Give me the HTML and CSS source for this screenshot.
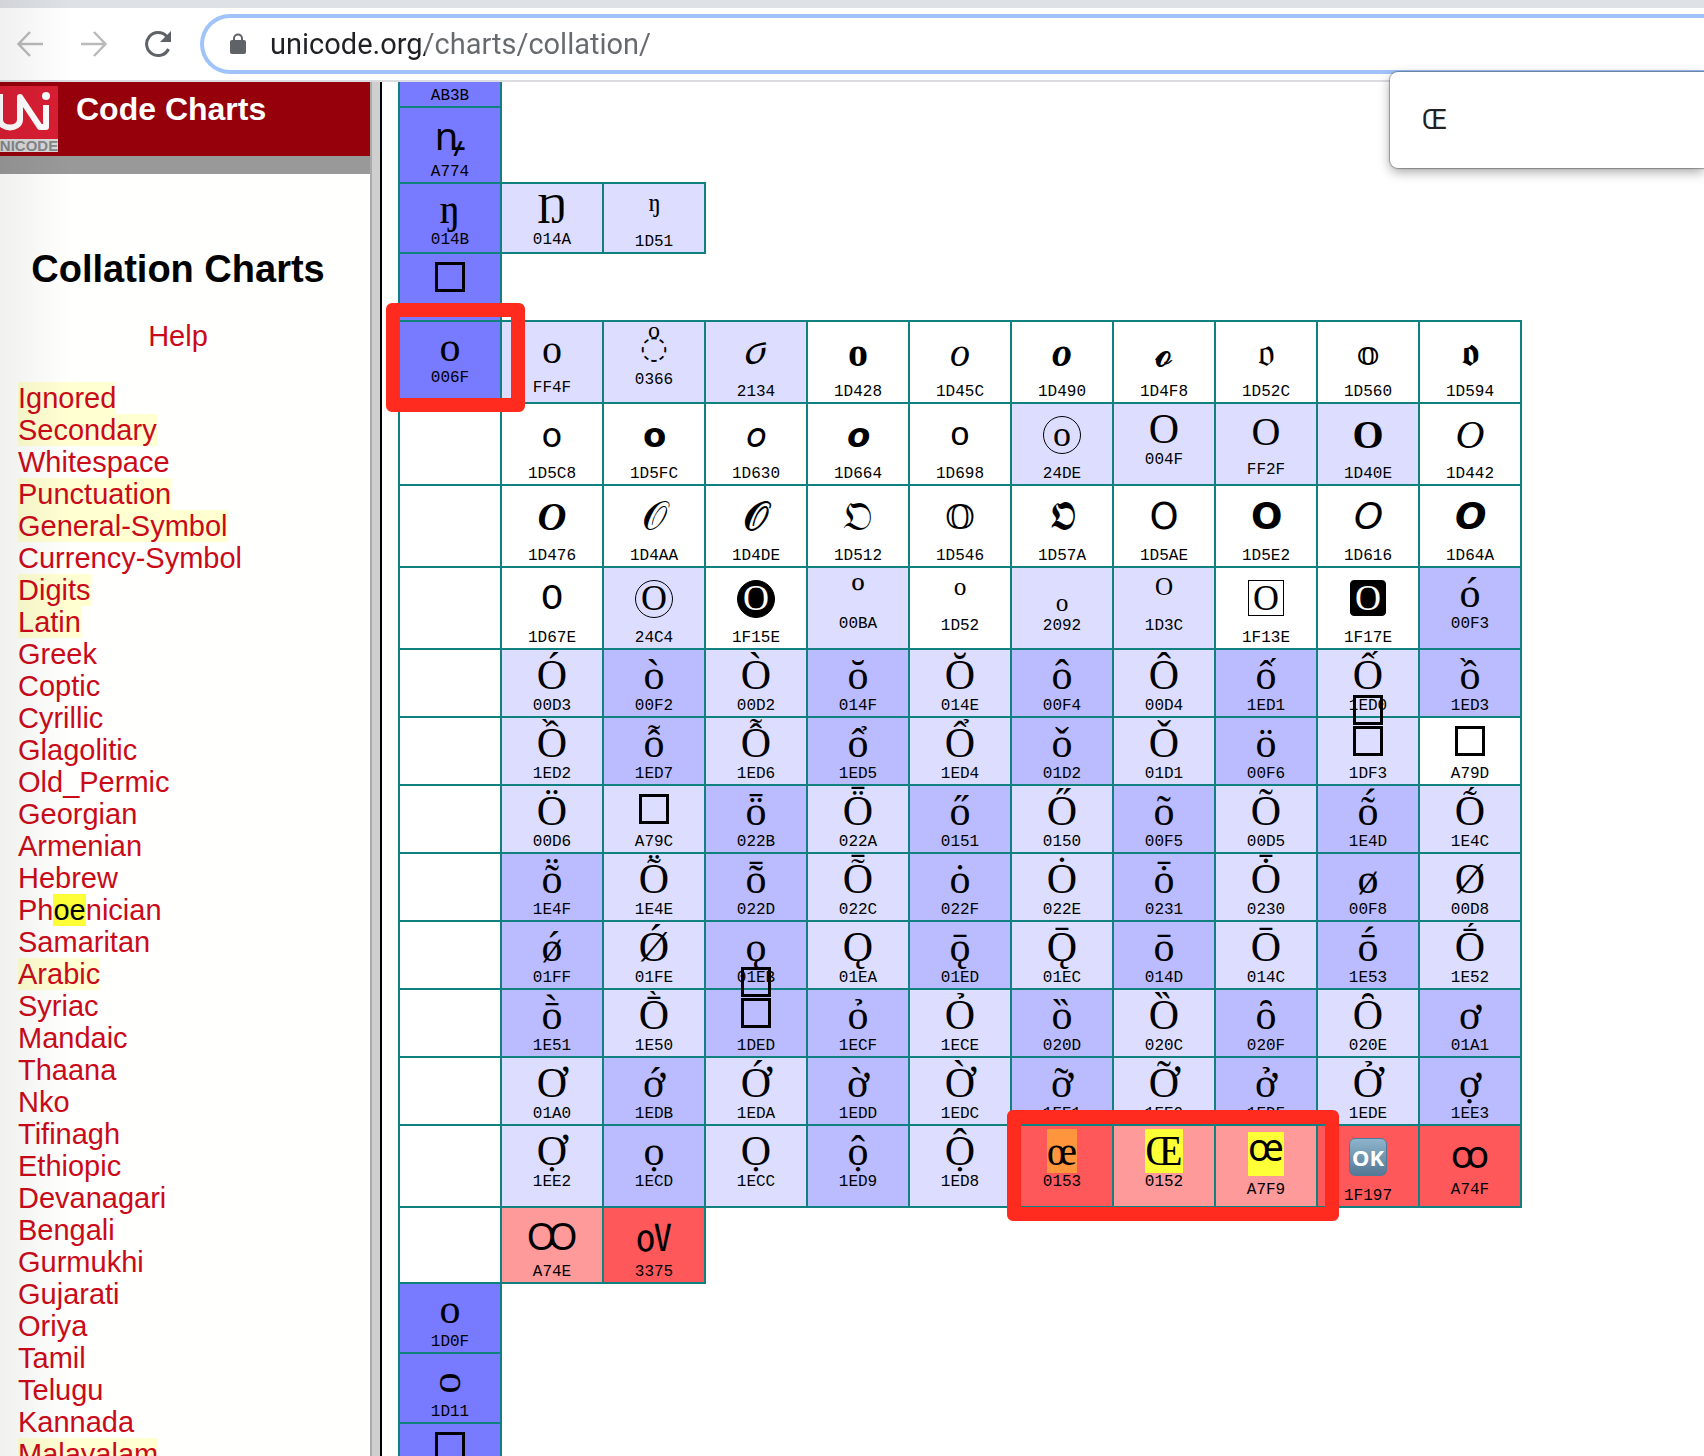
FILE: index.html
```html
<!DOCTYPE html>
<html lang="en">
<head>
<meta charset="utf-8">
<title>Collation Charts</title>
<link rel="stylesheet" href="styles.css">
</head>
<body>
<header class="browser">
  <button class="nav" aria-label="Back"><svg width="28" height="28" viewBox="0 0 28 28"><path d="M27 14H3M14 2L2.500 14L14 26" fill="none" stroke="#bababa" stroke-width="2.500"/></svg></button>
  <button class="nav" aria-label="Forward"><svg width="28" height="28" viewBox="0 0 28 28"><path d="M1 14H25M14 2L25.500 14L14 26" fill="none" stroke="#bababa" stroke-width="2.500"/></svg></button>
  <button class="nav" aria-label="Reload"><svg width="28" height="28" viewBox="0 0 28 28"><path d="M24.500 19A11.500 11.500 0 1 1 22.500 6.200" fill="none" stroke="#5f6368" stroke-width="3"/><path d="M27 1V12H16Z" fill="#5f6368"/></svg></button>
  <label class="omnibox">
    <svg width="16" height="22" viewBox="0 0 16 22"><rect y="7" width="16" height="14" rx="2" fill="#5f6368"/><path d="M4 8V5.500a4 4 0 0 1 8 0V8" fill="none" stroke="#5f6368" stroke-width="2"/></svg>
    <input class="url" aria-label="Address" value="unicode.org/charts/collation/">
  </label>
</header>
<main class="frames">
  <nav class="side">
    <div class="banner">
      <svg class="logo" width="58" height="66" viewBox="0 0 58 66"><rect width="58" height="66" fill="#d9d9d9"/><rect width="58" height="53" fill="#d91e33"/><path d="M0 8V34c1 10 19 10 20 0V11L40 41H46V19" fill="none" stroke="#fff" stroke-width="6" stroke-linejoin="round"/><circle cx="46" cy="10" r="4" fill="#fff"/><text x="-11" y="65" font-family="Liberation Sans" font-size="15" font-weight="bold" fill="#85878a">UNICODE</text></svg>
      <strong>Code Charts</strong>
    </div>
    <div class="strip"></div>
    <div class="menu">
      <h1>Collation Charts</h1>
      <p class="help"><a href="#help">Help</a></p>
      <ul>
        <li><a class="seen" href="#s">Ignored</a></li>
        <li><a class="seen" href="#s">Secondary</a></li>
        <li><a href="#s">Whitespace</a></li>
        <li><a class="seen" href="#s">Punctuation</a></li>
        <li><a class="seen" href="#s">General-Symbol</a></li>
        <li><a href="#s">Currency-Symbol</a></li>
        <li><a class="seen" href="#s">Digits</a></li>
        <li><a class="seen" href="#s">Latin</a></li>
        <li><a href="#s">Greek</a></li>
        <li><a href="#s">Coptic</a></li>
        <li><a href="#s">Cyrillic</a></li>
        <li><a href="#s">Glagolitic</a></li>
        <li><a href="#s">Old_Permic</a></li>
        <li><a href="#s">Georgian</a></li>
        <li><a href="#s">Armenian</a></li>
        <li><a href="#s">Hebrew</a></li>
        <li><a href="#s">Ph<mark>oe</mark>nician</a></li>
        <li><a href="#s">Samaritan</a></li>
        <li><a class="seen" href="#s">Arabic</a></li>
        <li><a href="#s">Syriac</a></li>
        <li><a href="#s">Mandaic</a></li>
        <li><a href="#s">Thaana</a></li>
        <li><a href="#s">Nko</a></li>
        <li><a href="#s">Tifinagh</a></li>
        <li><a href="#s">Ethiopic</a></li>
        <li><a href="#s">Devanagari</a></li>
        <li><a href="#s">Bengali</a></li>
        <li><a href="#s">Gurmukhi</a></li>
        <li><a href="#s">Gujarati</a></li>
        <li><a href="#s">Oriya</a></li>
        <li><a href="#s">Tamil</a></li>
        <li><a href="#s">Telugu</a></li>
        <li><a href="#s">Kannada</a></li>
        <li><a class="seen" href="#s">Malayalam</a></li>
      </ul>
    </div>
  </nav>
  <section class="chart">
    <table>
      <tr><td class="k cut"><code>AB3B</code></td></tr>
      <tr><td class="k s8"><span class="sans">ꝴ</span><code>A774</code></td></tr>
      <tr><td class="k"><span>ŋ</span><code>014B</code></td><td class="l"><span>Ŋ</span><code>014A</code></td><td class="l s2"><span>ᵑ</span><code>1D51</code></td></tr>
      <tr><td class="k"><div class="box"></div><code>&nbsp;</code></td></tr>
      <tr><td class="k"><span>o</span><code>006F</code></td><td class="l s10"><span class="wide">o</span><code>FF4F</code></td><td class="l s2"><span class="dotted"><small>o</small>◌</span><code>0366</code></td><td class="l s14"><span class="script">ℴ</span><code>2134</code></td><td class="s14"><span class="serif"><b>o</b></span><code>1D428</code></td><td class="s14"><span class="serif"><i>o</i></span><code>1D45C</code></td><td class="s14"><span class="serif"><b><i>o</i></b></span><code>1D490</code></td><td class="s14"><span class="serif">𝓸</span><code>1D4F8</code></td><td class="s14"><span class="serif">𝔬</span><code>1D52C</code></td><td class="s14"><span class="math">𝕠</span><code>1D560</code></td><td class="s14"><span class="serif">𝖔</span><code>1D594</code></td></tr>
      <tr><td></td><td class="s14"><span class="math">𝗈</span><code>1D5C8</code></td><td class="s14"><span class="math">𝗼</span><code>1D5FC</code></td><td class="s14"><span class="math">𝘰</span><code>1D630</code></td><td class="s14"><span class="math">𝙤</span><code>1D664</code></td><td class="s14"><span class="math mono">o</span><code>1D698</code></td><td class="l s14"><span class="enc"><b class="ring">o</b></span><code>24DE</code></td><td class="l"><span>O</span><code>004F</code></td><td class="l s10"><span class="wide">O</span><code>FF2F</code></td><td class="l s14"><span class="serif"><b>O</b></span><code>1D40E</code></td><td class="s14"><span class="serif"><i>O</i></span><code>1D442</code></td></tr>
      <tr><td></td><td class="s14"><span class="serif"><b><i>O</i></b></span><code>1D476</code></td><td class="s14"><span class="serif">𝒪</span><code>1D4AA</code></td><td class="s14"><span class="serif">𝓞</span><code>1D4DE</code></td><td class="s14"><span class="serif">𝔒</span><code>1D512</code></td><td class="s14"><span class="math">𝕆</span><code>1D546</code></td><td class="s14"><span class="serif">𝕺</span><code>1D57A</code></td><td class="s14"><span class="math cap">𝖮</span><code>1D5AE</code></td><td class="s14"><span class="math cap">𝗢</span><code>1D5E2</code></td><td class="s14"><span class="math cap">𝘖</span><code>1D616</code></td><td class="s14"><span class="math cap">𝙊</span><code>1D64A</code></td></tr>
      <tr><td></td><td class="s14"><span class="math mono cap">O</span><code>1D67E</code></td><td class="l s14"><span class="enc"><b class="ring">O</b></span><code>24C4</code></td><td class="s14"><span class="enc"><b class="ring solid">O</b></span><code>1F15E</code></td><td class="l"><span>º</span><code>00BA</code></td><td class="s2"><span>ᵒ</span><code>1D52</code></td><td class="l s2"><span>ₒ</span><code>2092</code></td><td class="l s2"><span>ᴼ</span><code>1D3C</code></td><td class="s14"><span class="enc"><b class="square">O</b></span><code>1F13E</code></td><td class="s14"><span class="enc"><b class="square solid">O</b></span><code>1F17E</code></td><td class="m"><span>ó</span><code>00F3</code></td></tr>
      <tr><td></td><td class="l"><span>Ó</span><code>00D3</code></td><td class="m"><span>ò</span><code>00F2</code></td><td class="l"><span>Ò</span><code>00D2</code></td><td class="m"><span>ŏ</span><code>014F</code></td><td class="l"><span>Ŏ</span><code>014E</code></td><td class="m"><span>ô</span><code>00F4</code></td><td class="l"><span>Ô</span><code>00D4</code></td><td class="m"><span>ố</span><code>1ED1</code></td><td class="l"><span>Ố</span><code>1ED0</code></td><td class="m"><span>ồ</span><code>1ED3</code></td></tr>
      <tr><td></td><td class="l"><span>Ồ</span><code>1ED2</code></td><td class="m"><span>ỗ</span><code>1ED7</code></td><td class="l"><span>Ỗ</span><code>1ED6</code></td><td class="m"><span>ổ</span><code>1ED5</code></td><td class="l"><span>Ổ</span><code>1ED4</code></td><td class="m"><span>ǒ</span><code>01D2</code></td><td class="l"><span>Ǒ</span><code>01D1</code></td><td class="m"><span>ö</span><code>00F6</code></td><td class="l"><div class="box double"></div><code>1DF3</code></td><td><div class="box"></div><code>A79D</code></td></tr>
      <tr><td></td><td class="l"><span>Ö</span><code>00D6</code></td><td class="l"><div class="box"></div><code>A79C</code></td><td class="m"><span>ȫ</span><code>022B</code></td><td class="l"><span>Ȫ</span><code>022A</code></td><td class="m"><span>ő</span><code>0151</code></td><td class="l"><span>Ő</span><code>0150</code></td><td class="m"><span>õ</span><code>00F5</code></td><td class="l"><span>Õ</span><code>00D5</code></td><td class="m"><span>ṍ</span><code>1E4D</code></td><td class="l"><span>Ṍ</span><code>1E4C</code></td></tr>
      <tr><td></td><td class="m"><span>ṏ</span><code>1E4F</code></td><td class="l"><span>Ṏ</span><code>1E4E</code></td><td class="m"><span>ȭ</span><code>022D</code></td><td class="l"><span>Ȭ</span><code>022C</code></td><td class="m"><span>ȯ</span><code>022F</code></td><td class="l"><span>Ȯ</span><code>022E</code></td><td class="m"><span>ȱ</span><code>0231</code></td><td class="l"><span>Ȱ</span><code>0230</code></td><td class="m"><span>ø</span><code>00F8</code></td><td class="l"><span>Ø</span><code>00D8</code></td></tr>
      <tr><td></td><td class="m"><span>ǿ</span><code>01FF</code></td><td class="l"><span>Ǿ</span><code>01FE</code></td><td class="m"><span>ǫ</span><code>01EB</code></td><td class="l"><span>Ǫ</span><code>01EA</code></td><td class="m"><span>ǭ</span><code>01ED</code></td><td class="l"><span>Ǭ</span><code>01EC</code></td><td class="m"><span>ō</span><code>014D</code></td><td class="l"><span>Ō</span><code>014C</code></td><td class="m"><span>ṓ</span><code>1E53</code></td><td class="l"><span>Ṓ</span><code>1E52</code></td></tr>
      <tr><td></td><td class="m"><span>ṑ</span><code>1E51</code></td><td class="l"><span>Ṑ</span><code>1E50</code></td><td class="m"><div class="box double"></div><code>1DED</code></td><td class="m"><span>ỏ</span><code>1ECF</code></td><td class="l"><span>Ỏ</span><code>1ECE</code></td><td class="m"><span>ȍ</span><code>020D</code></td><td class="l"><span>Ȍ</span><code>020C</code></td><td class="m"><span>ȏ</span><code>020F</code></td><td class="l"><span>Ȏ</span><code>020E</code></td><td class="m"><span>ơ</span><code>01A1</code></td></tr>
      <tr><td></td><td class="l"><span>Ơ</span><code>01A0</code></td><td class="m"><span>ớ</span><code>1EDB</code></td><td class="l"><span>Ớ</span><code>1EDA</code></td><td class="m"><span>ờ</span><code>1EDD</code></td><td class="l"><span>Ờ</span><code>1EDC</code></td><td class="m"><span>ỡ</span><code>1EE1</code></td><td class="l"><span>Ỡ</span><code>1EE0</code></td><td class="m"><span>ở</span><code>1EDF</code></td><td class="l"><span>Ở</span><code>1EDE</code></td><td class="m"><span>ợ</span><code>1EE3</code></td></tr>
      <tr><td></td><td class="l"><span>Ợ</span><code>1EE2</code></td><td class="m"><span>ọ</span><code>1ECD</code></td><td class="l"><span>Ọ</span><code>1ECC</code></td><td class="m"><span>ộ</span><code>1ED9</code></td><td class="l"><span>Ộ</span><code>1ED8</code></td><td class="r"><span><mark class="current">œ</mark></span><code>0153</code></td><td class="p"><span><mark>Œ</mark></span><code>0152</code></td><td class="p s8"><span class="sans raised"><mark>œ</mark></span><code>A7F9</code></td><td class="r s14"><span class="enc"><b class="ok">OK</b></span><code>1F197</code></td><td class="r s8"><span class="sans">ꝏ</span><code>A74F</code></td></tr>
      <tr><td></td><td class="p s8"><span class="sans">Ꝏ</span><code>A74E</code></td><td class="r s8"><span class="cjk">㍵</span><code>3375</code></td></tr>
      <tr><td class="k s2"><span>ᴏ</span><code>1D0F</code></td></tr>
      <tr><td class="k s2"><span>ᴑ</span><code>1D11</code></td></tr>
      <tr><td class="k"><div class="box"></div><code>&nbsp;</code></td></tr>
    </table>
    <div class="outline outline-base"></div>
    <div class="outline outline-match"></div>
  </section>
</main>
<div class="find"><input aria-label="Find in page" value="Œ"></div>
<div class="shade"></div>
</body>
</html>
```
FILE: styles.css
```css
*, *::before { box-sizing: border-box; }
body {
  margin: 0;
  height: 100vh;
  display: flex;
  flex-direction: column;
  overflow: hidden;
  position: relative;
  background: #fff;
  font-family: "Liberation Sans", sans-serif;
}
button { border: 0; background: none; padding: 0; }
input { border: 0; outline: 0; background: none; padding: 0; }

/* Browser toolbar */
.browser {
  flex: none;
  display: flex;
  align-items: center;
  height: 82px;
  padding: 6px 0 6px 16px;
  gap: 36px;
  border-top: 8px solid #dee1e6;
  border-bottom: 2px solid #dadce0;
}
.nav, .nav svg { display: block; width: 28px; height: 28px; }
.omnibox {
  flex: 1;
  display: flex;
  align-items: center;
  gap: 24px;
  height: 60px;
  margin-left: -8px;
  padding-left: 26px;
  border: 4px solid #a0c3fa;
  border-right: 0;
  border-radius: 30px 0 0 30px;
}
.url {
  flex: 1;
  height: 40px;
  font: 29px Roboto, sans-serif;
  color: #202124;
  background: linear-gradient(90deg, #202124 155px, #66696d 155px);
  -webkit-background-clip: text;
  background-clip: text;
  -webkit-text-fill-color: transparent;
}
.find {
  position: absolute;
  top: 72px;
  right: 0;
  width: 314px;
  height: 96px;
  padding: 28px 32px;
  background: #fff;
  border-radius: 8px 0 0 8px;
  box-shadow: 0 0 1px 1px rgba(0, 0, 0, .3), 0 4px 12px rgba(0, 0, 0, .35);
}
.find input {
  display: block;
  width: 100%;
  height: 40px;
  font: 27px Roboto, sans-serif;
  color: #202124;
}

/* Frames */
.frames { flex: 1; min-height: 0; display: flex; }
.side {
  flex: none;
  width: 382px;
  overflow: hidden;
  background: #fffffd;
  border-right: 2px solid #000;
  box-shadow: inset -8px 0 #cfcfcf, inset -10px 0 #aaa;
}
.banner, .strip { margin-right: 10px; }
.banner {
  display: flex;
  gap: 18px;
  height: 74px;
  padding-top: 4px;
  background: #96000b;
  color: #fff;
  font-size: 32px;
  line-height: 46px;
}
.logo { flex: none; }
.strip { height: 18px; background: #999; }
.menu { padding: 0 42px 0 18px; font-size: 29px; line-height: 32px; }
h1 {
  margin: 72px 0 0;
  font-size: 38px;
  line-height: 46px;
  text-align: center;
  white-space: nowrap;
}
.help { margin: 28px 0 30px; text-align: center; }
.menu ul { margin: 0; padding: 0; list-style: none; }
.menu a { color: #cb0a19; text-decoration: none; }
.seen { background: #ffffd2; }
mark { background: #ffff38; color: #000; }

/* Collation chart */
.chart { flex: 1; position: relative; overflow: hidden; padding-left: 16px; }
table { width: 1124px; table-layout: fixed; border-collapse: collapse; }
td {
  width: 102px;
  padding: 0;
  border: 2px solid #108080;
  vertical-align: top;
  text-align: center;
}
.cut { height: 25px; border-top: 0; padding-top: 5px; }
td span, td code, .box { display: block; }
td span {
  height: 47px;
  font: 42px/50px "Liberation Serif", "DejaVu Serif", "DejaVu Sans", serif;
}
td code { height: 19px; font: 16px/19px "Liberation Mono", monospace; }
td .sans { font-family: "Noto Sans", sans-serif; font-size: 38px; }
td .cjk { font-family: "Noto Sans CJK JP", sans-serif; font-size: 36px; }
td .wide { font-size: 40px; padding-top: 3px; }
td .dotted {
  padding-top: 1px;
  font: 32px/20px "DejaVu Sans", sans-serif;
}
.dotted small { display: block; font: 24px/14px "Liberation Serif", serif; }
.s2 span { height: 49px; }
.s8 span { height: 55px; padding-top: 2px; }
.s10 span { height: 57px; }
.s14 span { height: 61px; padding-top: 4px; }
td .serif, td .script { font-size: 40px; padding-top: 6px; }
td .script { font-family: "DejaVu Math TeX Gyre", "DejaVu Sans", serif; line-height: 46px; }
td .math { font-size: 34px; padding-top: 7px; }
td .cap { font-size: 37px; padding-top: 6px; }
td .mono { font-family: "Liberation Mono", monospace; }
.k { background: #787aff; }
.m { background: #bbbcff; }
.l { background: #dddeff; }
.p { background: #ff9a9b; }
.r { background: #ff585b; }
td mark { display: inline-block; height: 44px; line-height: 44px; }
.current { background: #ff953c; }
td .raised { display: flex; justify-content: center; padding-top: 6px; }
.raised mark { line-height: 28px; }
.box {
  position: relative;
  width: 30px;
  height: 30px;
  margin: 8px auto 9px;
  border: 3px solid #000;
}
.double::before {
  content: "";
  position: absolute;
  top: -34px;
  left: -3px;
  width: 30px;
  height: 30px;
  border: 3px solid #000;
}

/* Enclosed letters */
td .enc { display: flex; justify-content: center; padding-top: 12px; }
.enc b {
  width: 38px;
  height: 38px;
  border: 1px solid #000;
  font-size: 36px;
  font-weight: normal;
  line-height: 34px;
}
.ring { border-radius: 50%; }
.enc .square { width: 36px; height: 36px; }
.enc .solid { background: #000; color: #fff; }
.square.solid { border-radius: 4px; }
.enc .ok {
  border: 1px solid #4f7b98;
  border-radius: 6px;
  background: linear-gradient(#8db4cd, #557894);
  color: #fff;
  font: bold 22px/36px "Noto Sans", sans-serif;
}

/* Annotations drawn over the page */
.outline { position: absolute; border: 14px solid #ff2b1e; border-radius: 6px; }
.outline-base { left: 4px; top: 221px; width: 139px; height: 109px; }
.outline-match { left: 625px; top: 1028px; width: 332px; height: 111px; }
.shade {
  position: absolute;
  inset: 0 auto 0 0;
  width: 72px;
  pointer-events: none;
  background: linear-gradient(90deg, rgba(0, 0, 0, .06), rgba(0, 0, 0, 0));
}
```
